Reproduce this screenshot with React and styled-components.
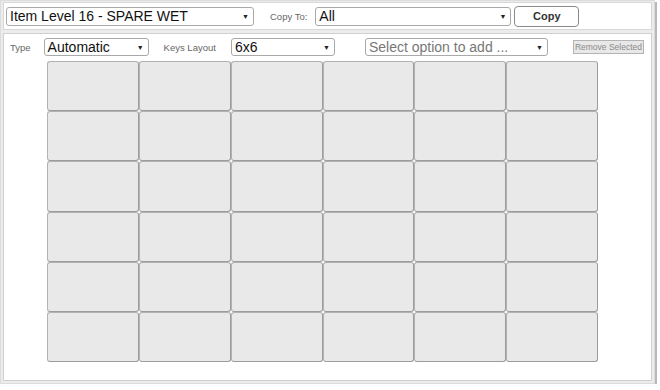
import React from 'react';
import styled, {createGlobalStyle} from 'styled-components';

const GlobalStyle = createGlobalStyle`
    html, body {
        margin: 0;
        padding: 0;
        background: #ffffff;
        font-family: "Liberation Sans", Arial, sans-serif;
    }
`;

// outer frame with the grey shadow at right and bottom
const Frame = styled.div`
    width: 655px;
    height: 384px;
    background: #ececec;
    border: 1px solid #dcdcdc;
    box-shadow: 2px 2px 0 #b8b8b8;
    padding: 1px 2px 2px 2px;
    box-sizing: border-box;
    display: flex;
    flex-direction: column;
    gap: 3px;
`;

const TopBar = styled.div`
    height: 28px;
    background: #fff;
    border: 1px solid #d8d8d8;
    box-sizing: border-box;
    display: flex;
    align-items: center;
    padding: 0 2px;
    flex-shrink: 0;
`;

const Main = styled.div`
    flex: 1;
    background: #fff;
    border: 1px solid #d0d0d0;
    box-sizing: border-box;
    display: flex;
    flex-direction: column;
`;

const Toolbar = styled.div`
    display: flex;
    align-items: center;
    height: 22px;
    margin-top: 2px;
    padding-left: 6px;
`;

const Label = styled.span`
    font-size: 9.5px;
    color: #666;
    white-space: nowrap;
    flex-shrink: 0;
    margin-left: ${(p) => p.$ml || 0}px;
    margin-right: ${(p) => p.$mr || 0}px;
`;

const FakeSelect = styled.div`
    width: ${(p) => p.$w}px;
    height: ${(p) => p.$h || 18}px;
    flex-shrink: 0;
    border: 1px solid #a9a9a9;
    border-radius: 3px;
    box-sizing: border-box;
    display: flex;
    align-items: center;
    justify-content: space-between;
    padding: 0 4px 0 3px;
    margin-left: ${(p) => p.$ml || 0}px;
    font-size: 14px;
    color: ${(p) => (p.$placeholder ? '#777' : '#111')};
    background: #fff;
    white-space: nowrap;
    overflow: hidden;
`;

const Arrow = styled.span`
    font-size: 7px;
    color: #222;
`;

const CopyButton = styled.button`
    width: 65px;
    height: 21px;
    margin-left: 3px;
    flex-shrink: 0;
    border: 1px solid #8a8a8a;
    border-radius: 4px;
    background: #fff;
    font-family: "Liberation Sans", Arial, sans-serif;
    font-weight: bold;
    font-size: 11px;
    color: #333;
    padding: 0;
`;

const RemoveButton = styled.button`
    height: 14px;
    margin-left: 25px;
    flex-shrink: 0;
    white-space: nowrap;
    border: 1px solid #b4b4b4;
    background: #e8e8e8;
    color: #8a8a8a;
    font-family: "Liberation Sans", Arial, sans-serif;
    font-size: 8.5px;
    padding: 0 1px;
    line-height: 12px;
`;

const KeyGrid = styled.div`
    display: grid;
    grid-template-columns: repeat(6, 1fr);
    grid-template-rows: repeat(6, 1fr);
    width: 551px;
    height: 301px;
    margin: 3px 0 0 43px;
`;

const KeyCell = styled.div`
    background: #e9e9e9;
    border: 1px solid #b2b2b2;
    border-right-color: #9c9c9c;
    border-bottom-color: #9c9c9c;
    border-radius: 3px;
`;

const Select = ({w, h, ml, placeholder, children}) => (
    <FakeSelect $w={w} $h={h} $ml={ml} $placeholder={placeholder}>
        <span>{children}</span>
        <Arrow>▼</Arrow>
    </FakeSelect>
);

export default function App() {
    const cells = Array.from({length: 36}, (_, i) => i);
    return (
        <>
            <GlobalStyle/>
            <Frame>
                <TopBar>
                    <Select w={248} h={19}>Item Level 16 - SPARE WET</Select>
                    <Label $ml={16} $mr={8}>Copy To:</Label>
                    <Select w={196} h={19}>All</Select>
                    <CopyButton>Copy</CopyButton>
                </TopBar>
                <Main>
                    <Toolbar>
                        <Label $mr={13}>Type</Label>
                        <Select w={105}>Automatic</Select>
                        <Label $ml={15} $mr={15}>Keys Layout</Label>
                        <Select w={104}>6x6</Select>
                        <Select w={183} ml={30} placeholder>Select option to add ...</Select>
                        <RemoveButton>Remove Selected</RemoveButton>
                    </Toolbar>
                    <KeyGrid>
                        {cells.map((i) => (
                            <KeyCell key={i}/>
                        ))}
                    </KeyGrid>
                </Main>
            </Frame>
        </>
    );
}
